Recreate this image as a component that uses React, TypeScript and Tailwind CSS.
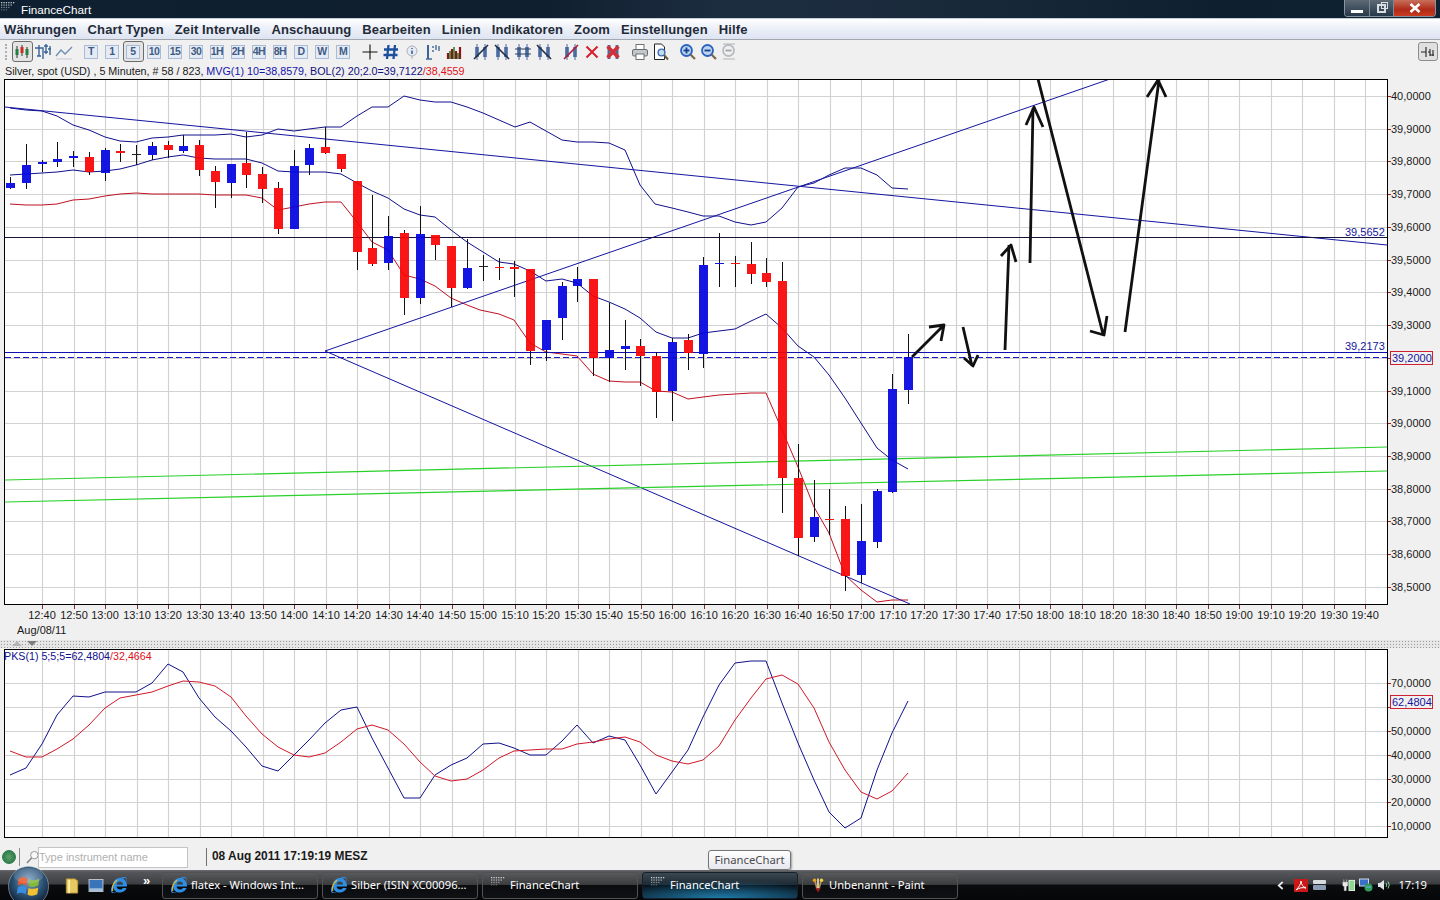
import { FaInternetExplorer } from "react-icons/fa";

type Candle = [number, number, number, number, number, string];

const R = "#f80404";
const B = "#0404e0";
const K = "#111111";

// traced off the reference, first group offset (0,90), second (480,220), all at 3x
const candlesA: Candle[] = [
  [31, 260, 298, 279, 294, B], [79, 162, 298, 225, 278, B], [127, 210, 245, 215, 222, B], [172, 156, 231, 207, 216, B],
  [220, 183, 231, 198, 204, B], [268, 186, 254, 201, 246, R], [316, 175, 273, 180, 248, B], [361, 162, 215, 183, 189, R],
  [409, 165, 225, 192, 195, K], [457, 156, 210, 168, 195, B], [505, 153, 203, 165, 180, R], [550, 136, 188, 168, 183, B],
  [598, 150, 258, 165, 240, R], [646, 228, 354, 243, 276, R], [694, 222, 324, 222, 279, B], [739, 125, 294, 219, 255, R],
  [787, 231, 339, 252, 297, R], [835, 276, 432, 294, 417, R], [883, 180, 417, 228, 417, B], [928, 163, 255, 174, 225, B],
  [976, 112, 192, 171, 189, R], [1024, 192, 246, 192, 237, R], [1072, 273, 540, 273, 486, R], [1117, 315, 528, 474, 522, R],
  [1165, 378, 540, 438, 519, B], [1213, 420, 675, 429, 624, R], [1261, 348, 642, 432, 624, B], [1306, 435, 510, 435, 465, R],
  [1354, 468, 651, 468, 594, R], [1402, 447, 597, 534, 594, B],
];
const candlesB: Candle[] = [
  [10, 105, 183, 138, 141, K], [58, 115, 180, 141, 144, R], [103, 123, 231, 142, 147, R], [151, 147, 435, 147, 393, R],
  [199, 300, 423, 300, 390, B], [247, 186, 360, 198, 294, B], [292, 141, 246, 177, 198, B], [340, 177, 468, 177, 413, R],
  [388, 249, 487, 390, 413, B], [436, 300, 450, 378, 387, B], [481, 357, 498, 378, 408, R], [529, 396, 594, 408, 516, R],
  [577, 354, 603, 366, 513, B], [625, 342, 450, 360, 399, R], [670, 111, 444, 135, 402, B], [718, 39, 201, 129, 132, B],
  [766, 108, 201, 129, 132, R], [814, 66, 192, 132, 162, R], [859, 114, 201, 159, 186, R], [907, 126, 879, 183, 774, R],
  [955, 672, 1008, 774, 954, R], [1003, 780, 966, 891, 951, B], [1048, 807, 945, 897, 900, R], [1096, 858, 1113, 897, 1068, R],
  [1144, 852, 1089, 963, 1065, B], [1192, 807, 984, 813, 966, B], [1237, 462, 819, 507, 816, B], [1285, 342, 552, 411, 510, B],
];

const upperBand = "10,108 26,110 42,111 57,116 73,125 89,130 105,137 120,141 136,142 152,138 168,137 183,135 199,135 215,135 231,134 246,137 262,135 278,129 294,131 309,129 325,127 341,127 357,116 372,107 388,107 404,96 420,100 435,102 451,102 467,107 483,113 499,120 515,127 530,122 546,131 562,140 577,142 593,142 609,143 625,150 640,185 655,204 672,208 688,212 703,216 719,216 735,222 751,225 766,222 782,208 798,187 814,183 829,175 845,168 861,168 877,175 892,188 908,189";
const midBand = "10,175 26,174 42,173 57,172 73,170 89,172 105,171 120,169 136,165 152,160 168,157 183,155 199,158 215,159 231,159 246,159 262,163 278,171 294,172 309,172 325,172 341,174 357,183 372,191 388,198 404,209 420,215 435,217 451,230 467,242 483,252 499,262 514,264 530,271 546,281 562,279 577,283 593,296 609,302 625,309 640,318 656,332 672,338 688,338 703,333 719,331 735,329 751,321 766,314 782,328 798,346 814,357 829,375 845,398 861,423 877,448 892,460 908,469";
const lowBand = "10,204 26,205 42,205 57,204 73,200 89,199 105,196 120,194 136,193 152,194 168,194 183,194 199,194 215,195 231,195 246,195 262,198 278,210 294,207 309,204 325,202 341,202 357,222 372,242 388,250 404,275 420,279 435,286 451,298 467,305 480,310 499,314 514,320 530,343 546,352 562,354 577,356 593,374 609,381 625,382 640,382 656,391 672,392 688,399 703,397 719,395 735,394 751,393 766,393 782,430 798,467 814,507 829,533 845,575 861,590 877,602 892,600 908,600";
const pksBlue = "10,775 26,768 42,744 57,715 73,696 89,697 105,692 120,692 136,692 152,683 168,664 183,672 199,698 215,717 231,731 246,747 262,766 278,771 294,755 309,740 325,723 341,710 357,707 372,738 388,768 404,798 420,798 435,775 451,765 467,758 483,744 499,743 514,748 530,755 546,755 562,741 577,725 593,743 609,736 625,740 640,765 656,794 672,772 688,750 703,717 719,685 735,663 751,661 766,661 782,703 798,743 814,780 829,812 845,828 861,818 877,770 892,733 908,701";
const pksRed = "10,751 26,757 42,757 57,749 73,739 89,725 105,708 120,698 136,695 152,692 168,686 183,681 199,682 215,686 231,697 246,716 262,734 278,747 294,755 309,757 325,753 341,742 357,729 372,725 388,730 404,744 420,762 435,776 451,781 467,779 483,770 499,758 514,751 530,750 546,749 562,749 577,744 593,742 609,739 625,737 640,742 656,755 672,761 688,764 703,760 719,746 735,720 751,698 766,679 782,675 798,684 814,708 829,742 845,770 861,792 877,799 892,791 908,773";

const arrows = [
  "M912 357 L944 325 M929 327 L944 325 L941 341",
  "M963 327 L972 366 M964 358 L973 366 L978 355",
  "M1005 350 L1009 245 M1001 256 L1011 245 L1016 262",
  "M1030 263 L1033 108 M1026 125 L1034 107 L1043 127",
  "M1038 79 L1103 334 M1090 331 L1104 335 L1107 316",
  "M1125 332 L1159 80 M1147 97 L1158 80 L1166 97",
];

const timeLabels: string[] = [];
for (let i = 0; i <= 42; i++) {
  const m = 12 * 60 + 40 + i * 10;
  timeLabels.push(`${Math.floor(m / 60)}:${String(m % 60).padStart(2, "0")}`);
}
const gridX = timeLabels.map((_, i) => Math.round(42 + i * 31.5) + 0.5);

const priceTicks = Array.from({ length: 16 }, (_, i) => ({
  y: Math.round(96 + i * 32.73) + 0.5,
  label: (40 - i * 0.1).toFixed(4).replace(".", ","),
}));
const pksTicks = [
  { y: 683.5, label: "70,0000" },
  { y: 707.5, label: "" },
  { y: 731.5, label: "50,0000" },
  { y: 755.5, label: "40,0000" },
  { y: 779.5, label: "30,0000" },
  { y: 802.5, label: "20,0000" },
  { y: 826.5, label: "10,0000" },
];

function CandleSet({ data, ox, oy }: { data: Candle[]; ox: number; oy: number }) {
  return (
    <>
      {data.map((c) => {
        const x = Math.round(ox + c[0] / 3);
        const wt = Math.round(oy + c[1] / 3);
        const wb = Math.round(oy + c[2] / 3);
        const bt = Math.round(oy + c[3] / 3);
        const bb = Math.max(bt + 1, Math.round(oy + c[4] / 3));
        return (
          <g key={c[0]}>
            <line x1={x + 0.5} x2={x + 0.5} y1={wt} y2={bt} stroke="#111" />
            <line x1={x + 0.5} x2={x + 0.5} y1={bb} y2={wb} stroke="#111" />
            <rect x={x - 4} y={bt} width={9} height={bb - bt} fill={c[5]} fillOpacity={0.93} />
          </g>
        );
      })}
    </>
  );
}

function MainChart() {
  return (
    <svg viewBox="0 79 1440 561" className="block w-[1440px] h-[561px] shrink-0">
      <defs>
        <clipPath id="plot">
          <rect x="5" y="80" width="1382" height="524" />
        </clipPath>
      </defs>
      <rect x="4.5" y="79.5" width="1383" height="525" fill="#fff" />
      {gridX.map((x) => (
        <line key={x} x1={x} x2={x} y1="80" y2="604" stroke="#d2d2d2" strokeWidth="1.2" />
      ))}
      {priceTicks.map((t) => (
        <line key={t.y} x1="5" x2="1387" y1={t.y} y2={t.y} stroke="#d2d2d2" strokeWidth="1.2" />
      ))}
      <g clipPath="url(#plot)" fill="none">
        <polyline points={upperBand} stroke="#10108c" />
        <polyline points={midBand} stroke="#10108c" />
        <polyline points={lowBand} stroke="#c01020" />
        <line x1="5" y1="107" x2="1387" y2="245" stroke="#1414a0" />
        <line x1="325" y1="351" x2="1110" y2="79" stroke="#1414a0" />
        <line x1="325" y1="351" x2="910" y2="604" stroke="#1414a0" />
        <line x1="5" x2="1387" y1="237.5" y2="237.5" stroke="#14143c" />
        <line x1="5" x2="1387" y1="352.5" y2="352.5" stroke="#1010b0" />
        <line x1="5" x2="1387" y1="357.5" y2="357.5" stroke="#1a1ac8" strokeDasharray="6 3" />
        <line x1="5" y1="480" x2="1387" y2="447" stroke="#28d028" strokeWidth="1.2" />
        <line x1="5" y1="502" x2="1387" y2="471" stroke="#28d028" strokeWidth="1.2" />
        <CandleSet data={candlesA} ox={0} oy={90} />
        <CandleSet data={candlesB} ox={480} oy={220} />
        {arrows.map((d) => (
          <path key={d} d={d} stroke="#111" strokeWidth="2.8" strokeLinejoin="round" />
        ))}
      </g>
      <rect x="4.5" y="79.5" width="1383" height="525" fill="none" stroke="#000" />
      {gridX.map((x, i) => (
        <g key={x}>
          <line x1={x} x2={x} y1="605" y2="609" stroke="#803030" />
          <text x={x - 0.5} y="619" textAnchor="middle" fontSize="11" fill="#1a1a1a">
            {timeLabels[i]}
          </text>
        </g>
      ))}
      {priceTicks.map((t) => (
        <g key={t.y}>
          <line x1="1388" x2="1391" y1={t.y} y2={t.y} stroke="#a02020" />
          <text x="1391" y={t.y + 3} fontSize="11" fill="#1a1a1a">
            {t.label}
          </text>
        </g>
      ))}
      <text x="1345" y="236" fontSize="11" fill="#1414a0">39,5652</text>
      <text x="1345" y="350" fontSize="11" fill="#1414a0">39,2173</text>
      <rect x="1390.5" y="351.5" width="42" height="13" fill="#f0f0f0" stroke="#d02030" />
      <text x="1392" y="362" fontSize="11" fill="#1414a0">39,2000</text>
      <text x="17" y="634" fontSize="11" fill="#1a1a1a">Aug/08/11</text>
    </svg>
  );
}

function PksChart() {
  return (
    <svg viewBox="0 648 1440 190" className="block w-[1440px] h-[190px] shrink-0">
      <rect x="4.5" y="649.5" width="1383" height="188" fill="#fff" />
      {gridX.map((x) => (
        <line key={x} x1={x} x2={x} y1="650" y2="837" stroke="#d2d2d2" strokeWidth="1.2" />
      ))}
      {pksTicks.map((t) => (
        <line key={t.y} x1="5" x2="1387" y1={t.y} y2={t.y} stroke="#d2d2d2" strokeWidth="1.2" />
      ))}
      <polyline points={pksBlue} fill="none" stroke="#10108c" />
      <polyline points={pksRed} fill="none" stroke="#d01828" />
      <rect x="4.5" y="649.5" width="1383" height="188" fill="none" stroke="#000" />
      <text x="4" y="660" fontSize="10.7">
        <tspan fill="#10108c">PKS(1) 5;5;5=62,4804</tspan>
        <tspan fill="#e01020">/32,4664</tspan>
      </text>
      {pksTicks.map((t) => (
        <g key={t.y}>
          <line x1="1388" x2="1391" y1={t.y} y2={t.y} stroke="#a02020" />
          {t.label && (
            <text x="1391" y={t.y + 3} fontSize="11" fill="#1a1a1a">
              {t.label}
            </text>
          )}
        </g>
      ))}
      <rect x="1390.5" y="695.5" width="42" height="13" fill="#f0f0f0" stroke="#d02030" />
      <text x="1392" y="706" fontSize="11" fill="#1414a0">62,4804</text>
    </svg>
  );
}

function AppDots({ className }: { className: string }) {
  const dots = [];
  for (let r = 0; r < 4; r++) {
    for (let c = 0; c < 6 - r; c++) {
      dots.push(<rect key={`${r}-${c}`} x={c * 2.4} y={r * 2.4} width="1.3" height="1.3" fill="#c8ccd0" fillOpacity={1 - r * 0.2} />);
    }
  }
  return (
    <svg viewBox="0 0 15 10" className={className}>
      {dots}
    </svg>
  );
}

function TitleBar() {
  return (
    <div className="h-[19px] shrink-0 flex items-center justify-between border-b border-[#c4ccd4] bg-[linear-gradient(90deg,#0e2031_0%,#101f30_38%,#1d2d40_50%,#1c2c3e_60%,#0e2030_85%,#0d2233_100%)]">
      <div className="flex items-center pt-[1px]">
        <AppDots className="w-[15px] h-[10px] ml-[1px] -mt-[4px]" />
        <span className="ml-[5px] text-white text-[11.7px] leading-none">FinanceChart</span>
      </div>
      <div className="self-start mr-[4px] h-[17px] w-[92px] flex rounded-b-[4px] border border-t-0 border-[#8a949e] overflow-hidden">
        <div className="w-[25px] flex items-end justify-center pb-[3px] border-r border-[#7d8892] bg-[linear-gradient(180deg,#5d6a76,#26384a)]">
          <div className="w-[12px] h-[3px] bg-white" />
        </div>
        <div className="w-[24px] flex items-center justify-center border-r border-[#7d8892] bg-[linear-gradient(180deg,#5d6a76,#26384a)]">
          <div className="relative w-[9px] h-[9px] border-2 border-[#d8dde2]">
            <div className="absolute -top-[4px] -right-[4px] w-[7px] h-[7px] border border-[#d8dde2]" />
          </div>
        </div>
        <div className="flex-1 flex items-center justify-center bg-[linear-gradient(180deg,#c8705c,#b02a18_60%,#c83c20)]">
          <svg viewBox="0 0 12 10" className="w-[12px] h-[10px]">
            <path d="M1.5 1 L10.5 9 M10.5 1 L1.5 9" stroke="#fff" strokeWidth="2.6" />
          </svg>
        </div>
      </div>
    </div>
  );
}

function MenuBar() {
  const items = ["Währungen", "Chart Typen", "Zeit Intervalle", "Anschauung", "Bearbeiten", "Linien", "Indikatoren", "Zoom", "Einstellungen", "Hilfe"];
  return (
    <div className="h-[21px] shrink-0 flex items-center gap-[11px] pl-[4px] border-b border-[#a4a8ae] bg-[linear-gradient(180deg,#ffffff_0%,#eef1f8_40%,#dde4f2_100%)]">
      {items.map((m) => (
        <span key={m} className="text-[13px] leading-none font-bold tracking-[0.12px] text-[#1f2b38]">
          {m}
        </span>
      ))}
    </div>
  );
}

function Cell({ children, active }: { children: React.ReactNode; active?: boolean }) {
  return (
    <div className={`w-[21px] h-[21px] flex items-center justify-center rounded-[3px] ${active ? "border-[1.5px] border-[#6c6c6c] bg-[#e4e4e4]" : ""}`}>
      {children}
    </div>
  );
}

function Period({ t, active }: { t: string; active?: boolean }) {
  return (
    <Cell active={active}>
      <div className="w-[14px] h-[14px] flex items-center justify-center border border-[#a8bcd8] bg-[#e4ebf5] text-[#3f5b84] font-bold text-[10.5px] leading-none tracking-[-0.5px]">
        {t}
      </div>
    </Cell>
  );
}

function Ic({ children }: { children: React.ReactNode }) {
  return (
    <svg viewBox="0 0 18 18" className="w-[18px] h-[18px]" fill="none">
      {children}
    </svg>
  );
}

function LineTool({ slash, kind }: { slash: string; kind: number }) {
  const diag = kind % 2 === 0 ? "M2 16 L16 2" : "M2 2 L16 16";
  return (
    <Ic>
      <path d="M5 1 V17 M13 1 V17" stroke="#4a6aa0" strokeWidth="1" />
      <path d="M5 4 V14 M13 4 V14" stroke="#4a6aa0" strokeWidth="3.6" />
      {kind === 2 && <path d="M1 6 H17 M1 11 H17" stroke="#2c4468" strokeWidth="1.2" />}
      {kind !== 2 && <path d={diag} stroke={slash} strokeWidth="1.6" />}
    </Ic>
  );
}

function ZoomIc({ sign, ghost }: { sign: "+" | "-"; ghost?: boolean }) {
  const c = ghost ? "#b8bcc0" : "#2a62c0";
  return (
    <Ic>
      <circle cx="7.5" cy="7.5" r="5.5" fill={ghost ? "#f0f0f0" : "#bcd4f0"} stroke={c} strokeWidth="1.8" />
      <path d="M4.5 7.5 H10.5" stroke={ghost ? "#a0a4a8" : "#12408c"} strokeWidth="1.8" />
      {sign === "+" && <path d="M7.5 4.5 V10.5" stroke="#12408c" strokeWidth="1.8" />}
      {ghost ? <path d="M2 1 H14 M2 16 H14" stroke="#b0b4b8" /> : <path d="M11.5 11.5 L16 16" stroke="#7a6850" strokeWidth="2.2" />}
    </Ic>
  );
}

function ToolBar() {
  return (
    <div className="h-[22px] shrink-0 flex items-center pl-[11.5px] pr-[2px] pt-[1px] gap-[6px] relative">
      <div className="absolute left-[5px] top-[4px] h-[16px] w-[2px] border-l-2 border-dotted border-[#b0b0b0]" />
      <div className="flex">
        <Cell active>
          <Ic>
            <path d="M4 3 V15 M9 2 V13 M14 4 V15" stroke="#333" />
            <rect x="2.5" y="6" width="3" height="6" fill="#20803c" />
            <rect x="7.5" y="4" width="3" height="6" fill="#d02828" />
            <rect x="12.5" y="6" width="3" height="6" fill="#20803c" />
          </Ic>
        </Cell>
        <Cell>
          <Ic>
            <path d="M1 5 H9 V16 M5 2 V13 M3 13 H7 M12 1 V11 M10 3 H14 M10 9 H14 M16 3 V12 M14 6 H17" stroke="#3a6498" strokeWidth="1.4" />
          </Ic>
        </Cell>
        <Cell>
          <Ic>
            <path d="M1 13 L6 7 L10 11 L17 4" stroke="#6a8cb4" strokeWidth="1.3" />
            <path d="M1 16 H17" stroke="#c4ccd8" />
          </Ic>
        </Cell>
      </div>
      <div className="flex">
        <Period t="T" />
        <Period t="1" />
        <Period t="5" active />
        {["10", "15", "30", "1H", "2H", "4H", "8H", "D", "W", "M"].map((p) => (
          <Period key={p} t={p} />
        ))}
      </div>
      <div className="flex">
        <Cell>
          <Ic>
            <path d="M1.5 9 H16.5 M9 1.5 V16.5" stroke="#111" strokeWidth="1.1" />
          </Ic>
        </Cell>
        <Cell>
          <Ic>
            <path d="M6.5 2 L5 16 M13 2 L11.5 16 M2 6.5 H16 M1.5 12 H15.5" stroke="#1c4f9c" strokeWidth="2.3" />
          </Ic>
        </Cell>
        <Cell>
          <Ic>
            <circle cx="9" cy="8" r="5" fill="#e8ecf2" stroke="#a8b0bc" />
            <path d="M9 13 L9 16" stroke="#a8b0bc" />
            <path d="M9 5 V6 M9 7.5 V11" stroke="#2a5aa0" strokeWidth="1.5" />
          </Ic>
        </Cell>
        <Cell>
          <Ic>
            <path d="M4 2 V16" stroke="#3a6498" strokeWidth="2" />
            <path d="M2 16 H8 M8 4 H10 M8 8 H10 M12 2 V7 M15 3 V8" stroke="#4a6a94" strokeWidth="1.4" />
          </Ic>
        </Cell>
        <Cell>
          <Ic>
            <path d="M3 10 V16 M7 6 V16 M11 8 V16 M15 4 V16" stroke="#8c1414" strokeWidth="2.2" />
            <path d="M5 8 V16 M9 4 V16 M13 10 V16" stroke="#2a8030" strokeWidth="1.6" />
          </Ic>
        </Cell>
      </div>
      <div className="flex">
        <Cell><LineTool slash="#1e2c44" kind={0} /></Cell>
        <Cell><LineTool slash="#1e2c44" kind={1} /></Cell>
        <Cell><LineTool slash="#1e2c44" kind={2} /></Cell>
        <Cell><LineTool slash="#1e2c44" kind={3} /></Cell>
      </div>
      <div className="flex">
        <Cell><LineTool slash="#b01838" kind={0} /></Cell>
        <Cell>
          <Ic>
            <path d="M3.5 3.5 L14.5 14.5 M14.5 3.5 L3.5 14.5" stroke="#d8202c" strokeWidth="2" />
          </Ic>
        </Cell>
        <Cell>
          <Ic>
            <path d="M5 2 V16 M13 2 V16" stroke="#4a6a9c" strokeWidth="3" />
            <path d="M3.5 3.5 L14.5 14.5 M14.5 3.5 L3.5 14.5" stroke="#d03038" strokeWidth="3.6" />
          </Ic>
        </Cell>
      </div>
      <div className="flex">
        <Cell>
          <Ic>
            <rect x="5" y="1.5" width="8" height="5" fill="#fff" stroke="#707070" />
            <rect x="1.5" y="6.5" width="15" height="6.5" rx="1.5" fill="#c4c8cc" stroke="#686c70" />
            <rect x="5" y="11" width="8" height="5.5" fill="#fff" stroke="#707070" />
          </Ic>
        </Cell>
        <Cell>
          <Ic>
            <path d="M2.5 1 H9.5 L12.5 4 V16.5 H2.5 Z" fill="#fff" stroke="#222" />
            <circle cx="9.5" cy="9.5" r="3.4" fill="#c4daf0" stroke="#3a70b0" strokeWidth="1.4" />
            <path d="M12 12 L16 16.5" stroke="#6a5a48" strokeWidth="2" />
          </Ic>
        </Cell>
      </div>
      <div className="flex">
        <Cell><ZoomIc sign="+" /></Cell>
        <Cell><ZoomIc sign="-" /></Cell>
        <Cell><ZoomIc sign="-" ghost /></Cell>
      </div>
      <div className="ml-auto w-[20px] h-[19px] flex items-center justify-center rounded-[3px] border border-[#8c8c8c] bg-[#e0e0e0]">
        <svg viewBox="0 0 14 12" className="w-[14px] h-[12px]" fill="none">
          <path d="M0 6 H5 M5 1 V11 M7 6 H9 M9 3 V10 M9 9 H13 M12 4 V10" stroke="#222" strokeWidth="1.1" />
        </svg>
      </div>
    </div>
  );
}

function InfoLine() {
  return (
    <div className="h-[17px] shrink-0 pl-[5px] pt-[1px] flex items-center text-[10.75px] leading-none whitespace-pre text-[#1a1a1a]">
      <span>Silver, spot (USD) , 5 Minuten, # 58 / 823, </span>
      <span className="text-[#1414a8]">MVG(1) 10=38,8579, </span>
      <span className="text-[#10107c]">BOL(2) 20;2.0=39,7122</span>
      <span className="text-[#e01020]">/38,4559</span>
    </div>
  );
}

function Splitter() {
  return (
    <div className="h-[8px] shrink-0 relative bg-[#e6e6e6] bg-[radial-gradient(#9c9c9c_0.7px,transparent_0.8px)] bg-[length:3px_3px]">
      <div className="absolute left-[12px] top-[1px] w-0 h-0 border-x-[5px] border-x-transparent border-b-[5px] border-b-[#b4b4b4]" />
      <div className="absolute left-[27px] top-[1px] w-0 h-0 border-x-[5px] border-x-transparent border-t-[5px] border-t-[#7c7c7c]" />
    </div>
  );
}

function StatusBar() {
  return (
    <div className="h-[32px] shrink-0 relative flex items-center pl-[2px] pt-[6px]">
      <div className="w-[14px] h-[14px] rounded-full border border-[#2a7a48] bg-[radial-gradient(circle,#5fa06c,#1f7040)]" />
      <div className="ml-[3px] w-px h-[18px] bg-[#8c8c8c]" />
      <svg viewBox="0 0 14 16" className="ml-[6px] w-[13px] h-[15px]" fill="none">
        <circle cx="9" cy="5.5" r="4" stroke="#909090" fill="#f8f8f8" />
        <path d="M6 8.5 L1 14" stroke="#808080" strokeWidth="1.5" />
      </svg>
      <div className="ml-[-1px] w-[150px] h-[21px] flex items-center border border-[#c4c4c4] bg-white text-[11px] leading-none text-[#b0b0b0]">
        Type instrument name
      </div>
      <div className="ml-[18px] w-px h-[18px] bg-[#707070]" />
      <span className="ml-[5px] font-bold text-[11.9px] leading-none text-[#1a1a1a]">08 Aug 2011 17:19:19 MESZ</span>
      <div className="absolute left-[708px] top-[12px] h-[20px] w-[83px] flex items-center justify-center rounded-[3px] border border-[#767676] bg-[linear-gradient(180deg,#ffffff,#e6e6f0)] text-[11.3px] leading-none text-[#4c4c4c] font-['Noto_Sans',sans-serif] shadow-[1px_1px_2px_rgba(0,0,0,0.35)]">
        FinanceChart
      </div>
    </div>
  );
}

function IeIcon() {
  return (
    <span className="relative w-[16px] h-[16px] shrink-0 flex items-center justify-center">
      <FaInternetExplorer className="w-[16px] h-[16px] text-[#2f8fe6]" />
      <svg viewBox="0 0 16 16" className="absolute inset-0" fill="none">
        <path d="M2 14 C0 11 2 7 6 3" stroke="#e8b830" strokeWidth="1.2" />
      </svg>
    </span>
  );
}

function PaintIcon() {
  return (
    <svg viewBox="0 0 16 18" className="w-[14px] h-[17px] shrink-0" fill="none">
      <path d="M4 2 L7 13 M12 2 L9 13" stroke="#b09060" strokeWidth="2" />
      <path d="M8 1 V12" stroke="#e8d8a8" strokeWidth="2" />
      <circle cx="4" cy="3" r="2" fill="#e8a020" />
      <circle cx="12" cy="3" r="2" fill="#f0d040" />
      <path d="M5 12 L8 17 L11 12 Z" fill="#a01818" />
    </svg>
  );
}

function TaskButton({ icon, label, active }: { icon: React.ReactNode; label: string; active?: boolean }) {
  return (
    <div
      className={`w-[156px] h-[27px] flex items-center gap-[4px] pl-[8px] rounded-[3px] border ${
        active
          ? "border-[#14202c] bg-[radial-gradient(ellipse_80%_70%_at_50%_100%,#1f7aa8,transparent),linear-gradient(180deg,#3a4650_0%,#1c2a34_48%,#050a10_50%,#0a1a26_100%)]"
          : "border-[#505254] bg-[linear-gradient(180deg,#58595b_0%,#3a3b3d_48%,#0b0c0e_50%,#101114_100%)]"
      }`}
    >
      {icon}
      <span className="text-[11.2px] leading-none text-white whitespace-nowrap font-['Noto_Sans',sans-serif]">{label}</span>
    </div>
  );
}

function StartOrb() {
  return (
    <svg viewBox="0 0 44 44" className="absolute left-[7px] top-[-5px] w-[43px] h-[43px]">
      <defs>
        <radialGradient id="orb" cx="50%" cy="35%" r="65%">
          <stop offset="0" stopColor="#7fa4c4" />
          <stop offset="0.55" stopColor="#2e5478" />
          <stop offset="1" stopColor="#0c1c30" />
        </radialGradient>
      </defs>
      <circle cx="22" cy="22" r="20.5" fill="url(#orb)" stroke="#aab4be" strokeOpacity="0.6" />
      <path d="M12 14 Q16 11 21 14 L20 21 Q15 18 11 21 Z" fill="#e8582c" />
      <path d="M23 14.5 Q27 17 33 14 L32 21 Q27 23.5 22 21.5 Z" fill="#84b83a" />
      <path d="M11 23 Q15 20 20 23 L19 30 Q14 27 10 30 Z" fill="#3a8ce0" />
      <path d="M22 23.5 Q27 25.5 32 23 L31 30 Q26 32.5 21 30.5 Z" fill="#f0c030" />
      <ellipse cx="22" cy="11" rx="15" ry="8" fill="#fff" fillOpacity="0.14" />
    </svg>
  );
}

function Taskbar() {
  return (
    <div className="h-[30px] shrink-0 relative flex items-center bg-[linear-gradient(180deg,#6a6c6e_0px,#54565a_2px,#3c3e42_14px,#0b0c0e_15px,#050608_100%)]">
      <StartOrb />
      <div className="ml-[65px] flex items-center w-[97px]">
        <svg viewBox="0 0 14 18" className="w-[14px] h-[17px] shrink-0">
          <path d="M1 2 H10 L13 4 V17 H1 Z" fill="#e8c860" stroke="#b89838" />
          <path d="M4 3 V17" stroke="#fff0a8" strokeWidth="2" />
        </svg>
        <svg viewBox="0 0 16 14" className="ml-[9px] w-[16px] h-[13px] shrink-0">
          <rect x="0.5" y="0.5" width="15" height="13" fill="#3a74b8" stroke="#c0c8d0" />
          <path d="M1 10 H15 V13 H1 Z" fill="#a4c0dc" />
        </svg>
        <span className="ml-[7px]">
          <IeIcon />
        </span>
        <span className="ml-[16px] text-[13px] leading-none font-bold text-white -mt-[10px]">»</span>
      </div>
      <div className="flex gap-[4px]">
        <TaskButton icon={<IeIcon />} label="flatex - Windows Int..." />
        <TaskButton icon={<IeIcon />} label="Silber (ISIN XC00096..." />
        <TaskButton icon={<AppDots className="w-[15px] h-[10px] shrink-0 -mt-[6px]" />} label="FinanceChart" />
        <TaskButton icon={<AppDots className="w-[15px] h-[10px] shrink-0 -mt-[6px]" />} label="FinanceChart" active />
        <TaskButton icon={<PaintIcon />} label="Unbenannt - Paint" />
      </div>
      <div className="ml-auto flex items-center pr-[13px]">
        <svg viewBox="0 0 8 10" className="w-[7px] h-[9px] mr-[10px]" fill="none">
          <path d="M6.5 1 L2 5 L6.5 9" stroke="#e8e8e8" strokeWidth="2" />
        </svg>
        <svg viewBox="0 0 14 13" className="w-[14px] h-[13px] mr-[4px]" fill="none">
          <rect width="14" height="13" fill="#c81818" />
          <path d="M2 11 C5 8 7 5 7 2 C7 5 9 8 12 9 C8 8 5 9 2 11 Z" stroke="#fff" strokeWidth="1" />
        </svg>
        <svg viewBox="0 0 14 12" className="w-[15px] h-[12px] mr-[15px]">
          <rect x="0.5" y="1" width="13" height="4" rx="1" fill="#d8dce0" />
          <rect x="0.5" y="6" width="13" height="5" rx="1" fill="#8c9cb4" />
        </svg>
        <svg viewBox="0 0 14 14" className="w-[13px] h-[14px] mr-[4px]">
          <path d="M2 1 V4 M5 1 V4 M1 4 H6 V8 H4.5 V13 H2.5 V8 H1 Z" fill="#e8e8e8" stroke="#e8e8e8" strokeWidth="0.6" />
          <rect x="7.5" y="2" width="6" height="11" fill="#8cd890" stroke="#e8f0e8" />
        </svg>
        <svg viewBox="0 0 14 14" className="w-[14px] h-[14px] mr-[4px]">
          <rect x="0.5" y="1" width="9" height="7" fill="#3a70c8" stroke="#d0d8e4" />
          <circle cx="9.5" cy="9.5" r="4" fill="#2f9c5c" />
          <path d="M7 9 H12" stroke="#70b8f0" />
        </svg>
        <svg viewBox="0 0 14 12" className="w-[14px] h-[12px] mr-[7px]" fill="none">
          <path d="M1 4 H3 L7 1 V11 L3 8 H1 Z" fill="#dfe4e8" />
          <path d="M9 4 Q10.5 6 9 8 M11 2.5 Q13.5 6 11 9.5" stroke="#8ad0a0" />
        </svg>
        <span className="text-[11.2px] leading-none text-white font-['Noto_Sans',sans-serif]">17:19</span>
      </div>
    </div>
  );
}

export default function App() {
  return (
    <div className="w-[1440px] h-[900px] overflow-hidden flex flex-col bg-[#f0f0f0] font-['Liberation_Sans',Arial,sans-serif]">
      <TitleBar />
      <MenuBar />
      <ToolBar />
      <InfoLine />
      <MainChart />
      <Splitter />
      <PksChart />
      <StatusBar />
      <Taskbar />
    </div>
  );
}
